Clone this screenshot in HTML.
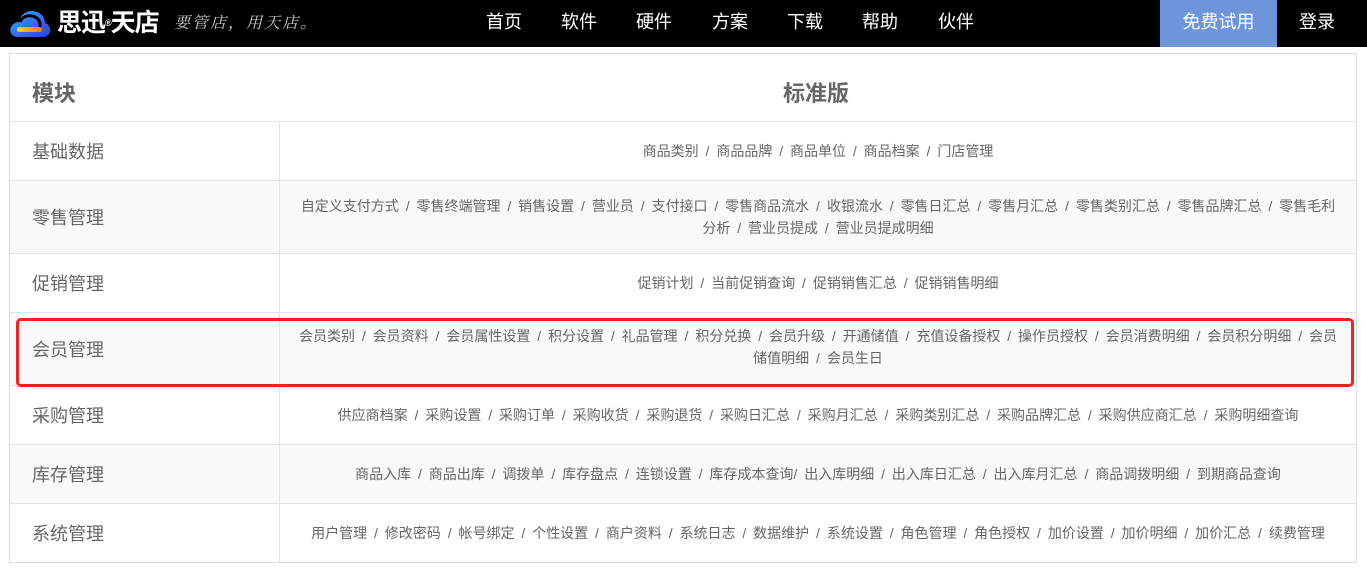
<!DOCTYPE html>
<html><head><meta charset="utf-8"><style>
*{margin:0;padding:0;box-sizing:border-box}
body{width:1367px;height:571px;background:#fff;font-family:"Liberation Sans","Noto Sans CJK SC",sans-serif;position:relative;overflow:hidden;color:#666}
.top{position:absolute;left:0;top:0;width:1367px;height:47px;background:#000}
.nav{position:absolute;top:10px;color:#fff;font-size:18px;line-height:24px}
.btn{position:absolute;left:1160px;top:0;width:117px;height:47px;background:#6e95dc;color:#fff;font-size:18px;line-height:45px;text-align:center}
.tbl{position:absolute;left:9px;top:53px;width:1348px;height:510px;border:1px solid #ddd}
.row{position:absolute;left:0;width:1346px;border-top:1px solid #e3e3e3}
.row.g{background:#f9f9f9}
.m{position:absolute;left:0;top:0;width:270px;height:100%;border-right:1px solid #e3e3e3;font-size:18px;padding-left:22px;display:flex;align-items:center}
.c{position:absolute;left:270px;right:0;top:0;height:100%;font-size:14px;line-height:22px;display:flex;align-items:center;justify-content:center;text-align:center;padding:0 16px;word-spacing:3px}
.red{position:absolute;left:16px;top:318px;width:1338px;height:69px;border:3px solid #f2231c;border-radius:5px}
</style></head><body>
<div class="top">
<svg style="position:absolute;left:8px;top:8px" width="44" height="32" viewBox="0 0 44 32">
<defs><linearGradient id="g1" x1="0" y1="0" x2="1" y2="1"><stop offset="0" stop-color="#1fb6ff"/><stop offset=".5" stop-color="#3a6cf0"/><stop offset="1" stop-color="#2a45c8"/></linearGradient>
<linearGradient id="g2" x1="0" y1="0" x2="1" y2="0"><stop offset="0" stop-color="#ffd000"/><stop offset="1" stop-color="#ff7a00"/></linearGradient></defs>
<path d="M10 29C3 29 1 23 3 19 5 15 9 14 11 14 12 7 18 3 24 3 32 3 37 9 37 15 41 16 43 20 42 24 41 28 37 29 34 29Z" fill="url(#g1)"/>
<path d="M11 24C8 24 8 19 11 19L31 19C35 19 35 24 31 24Z" fill="url(#g2)"/>
<path d="M12 14C14 9 19 7 24 8 30 9 33 14 32 19" fill="none" stroke="#000" stroke-width="3"/>
</svg>
<div style="position:absolute;left:57px;top:7px;color:#fff;font-size:25px;font-weight:bold;line-height:32px;letter-spacing:-1px">思迅<span style="font-size:9px;vertical-align:top">®</span>天店</div>
<div style="position:absolute;left:174px;top:13px;color:#ccc;font-size:16px;font-style:italic;line-height:22px;letter-spacing:2px;font-family:'Liberation Serif','Noto Serif CJK SC',serif">要管店，用天店。</div>
<div class="nav" style="left:486px">首页</div>
<div class="nav" style="left:561px">软件</div>
<div class="nav" style="left:636px">硬件</div>
<div class="nav" style="left:712px">方案</div>
<div class="nav" style="left:787px">下载</div>
<div class="nav" style="left:862px">帮助</div>
<div class="nav" style="left:938px">伙伴</div>
<div class="btn">免费试用</div>
<div class="nav" style="left:1299px">登录</div>
</div>
<div class="tbl">
<div style="position:absolute;left:22px;top:22px;font-size:22px;font-weight:bold;color:#666">模块</div>
<div style="position:absolute;left:773px;top:22px;font-size:22px;font-weight:bold;color:#666">标准版</div>
<div class="row" style="top:67px;height:59px"><div class="m">基础数据</div><div class="c">商品类别 / 商品品牌 / 商品单位 / 商品档案 / 门店管理</div></div>
<div class="row g" style="top:126px;height:73px"><div class="m">零售管理</div><div class="c">自定义支付方式 / 零售终端管理 / 销售设置 / 营业员 / 支付接口 / 零售商品流水 / 收银流水 / 零售日汇总 / 零售月汇总 / 零售类别汇总 / 零售品牌汇总 / 零售毛利分析 / 营业员提成 / 营业员提成明细</div></div>
<div class="row" style="top:199px;height:59px"><div class="m">促销管理</div><div class="c">促销计划 / 当前促销查询 / 促销销售汇总 / 促销销售明细</div></div>
<div class="row g" style="top:258px;height:73px"><div class="m">会员管理</div><div class="c" style="align-items:flex-start;padding-top:12px">会员类别 / 会员资料 / 会员属性设置 / 积分设置 / 礼品管理 / 积分兑换 / 会员升级 / 开通储值 / 充值设备授权 / 操作员授权 / 会员消费明细 / 会员积分明细 / 会员储值明细 / 会员生日</div></div>
<div class="row" style="top:331px;height:59px"><div class="m">采购管理</div><div class="c">供应商档案 / 采购设置 / 采购订单 / 采购收货 / 采购退货 / 采购日汇总 / 采购月汇总 / 采购类别汇总 / 采购品牌汇总 / 采购供应商汇总 / 采购明细查询</div></div>
<div class="row g" style="top:390px;height:59px"><div class="m">库存管理</div><div class="c">商品入库 / 商品出库 / 调拨单 / 库存盘点 / 连锁设置 / 库存成本查询/ 出入库明细 / 出入库日汇总 / 出入库月汇总 / 商品调拨明细 / 到期商品查询</div></div>
<div class="row" style="top:449px;height:59px"><div class="m">系统管理</div><div class="c">用户管理 / 修改密码 / 帐号绑定 / 个性设置 / 商户资料 / 系统日志 / 数据维护 / 系统设置 / 角色管理 / 角色授权 / 加价设置 / 加价明细 / 加价汇总 / 续费管理</div></div>
</div>
<div class="red"></div>
</body></html>
